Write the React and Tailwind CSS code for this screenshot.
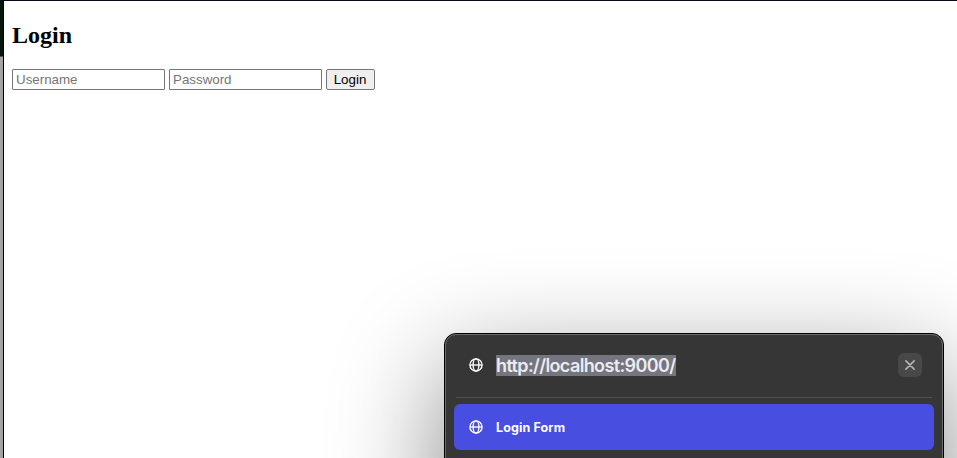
function Globe() {
  return (
    <svg className="size-[14px] shrink-0" viewBox="0 0 14 14" fill="none" stroke="#fff" strokeWidth="1.35">
      <circle cx="7" cy="7" r="6.1" />
      <ellipse cx="7" cy="7" rx="2.9" ry="6.1" />
      <path d="M1 7h12" />
    </svg>
  );
}

function Field({ type, placeholder }) {
  return (
    <input
      type={type}
      placeholder={placeholder}
      className="h-[21px] w-[153px] rounded-[1px] border border-[#767676] bg-white px-[3px] py-0 font-['Liberation_Sans',Arial,sans-serif] text-[13.333px] leading-[15px] placeholder:text-[#757575]"
    />
  );
}

function LoginPage() {
  return (
    <main className="flex-1 border-t border-l border-t-[#0b0a1c] border-l-black bg-white px-2 pt-[20px]">
      <h2 className="font-['Liberation_Serif','Times_New_Roman',serif] text-2xl leading-[28px] font-bold text-black">Login</h2>
      <form className="mt-[20px] flex gap-1">
        <Field type="text" placeholder="Username" />
        <Field type="password" placeholder="Password" />
        <button
          type="button"
          className="h-[21px] w-[49px] rounded-[2px] border border-[#767676] bg-[#efefef] pr-px font-['Liberation_Sans',Arial,sans-serif] text-[13.333px] leading-[15px] text-black"
        >
          Login
        </button>
      </form>
    </main>
  );
}

function CommandPalette() {
  return (
    <section className="absolute top-[333px] left-[444px] h-[420px] w-[500px] rounded-[12px] border border-black bg-[#363636] font-[Inter,sans-serif] shadow-[0_36px_110px_rgba(0,0,0,0.48)]">
      <div className="h-full rounded-[11px] border border-[#6a6a6a] px-2">
        <div className="mx-[2px] flex h-[63px] items-center border-b border-[#505050] pr-[10px] pb-[2px] pl-[13px]">
          <Globe />
          <span className="ml-[13px] h-[21px] w-[180px] bg-[#757580] text-[18px] leading-[21px] font-semibold tracking-[-0.62px] whitespace-nowrap text-[#ececf0]">
            http://localhost:9000/
          </span>
          <button type="button" aria-label="Close" className="ml-auto flex size-6 items-center justify-center rounded-[6px] bg-[#484848]">
            <svg className="size-[10px]" viewBox="0 0 10 10" stroke="#b4b4b4" strokeWidth="1.6" strokeLinecap="round">
              <path d="M.9.9l8.2 8.2M9.1.9L.9 9.1" />
            </svg>
          </button>
        </div>
        <div className="mt-[6px] flex h-[46px] items-center rounded-[6px] bg-[#484ee0] pl-[15px]">
          <Globe />
          <span className="ml-[13px] pt-[2px] text-[12.5px] leading-4 font-bold tracking-[0.12px] text-white">Login Form</span>
        </div>
      </div>
    </section>
  );
}

export default function App() {
  return (
    <div className="relative flex h-[458px] w-[957px] overflow-hidden bg-white">
      <div className="w-[3px] bg-linear-to-b from-[#07150c] from-[56px] to-[#a5a3a1] to-[57px]" />
      <LoginPage />
      <CommandPalette />
    </div>
  );
}
